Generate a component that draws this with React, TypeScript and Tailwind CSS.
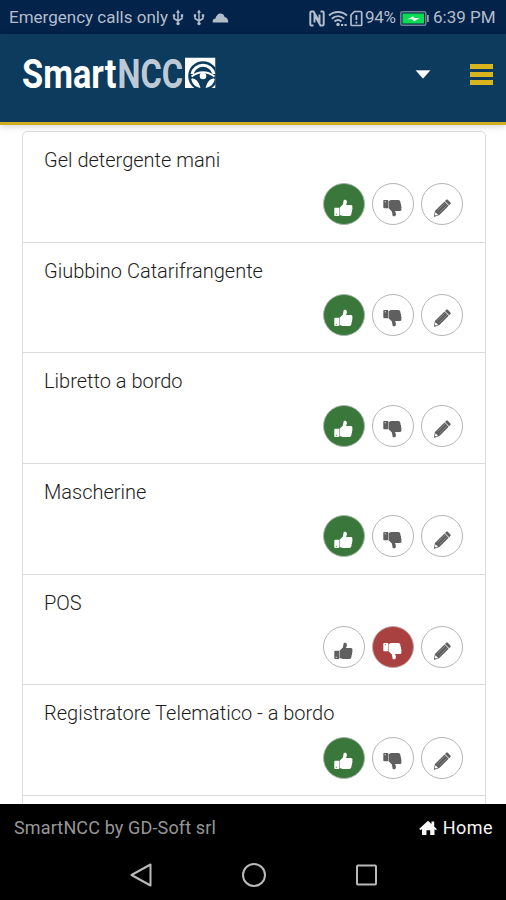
type Vote = "up" | "down";

interface CheckItem {
  label: string;
  vote: Vote;
}

const items: CheckItem[] = [
  { label: "Gel detergente mani", vote: "up" },
  { label: "Giubbino Catarifrangente", vote: "up" },
  { label: "Libretto a bordo", vote: "up" },
  { label: "Mascherine", vote: "up" },
  { label: "POS", vote: "down" },
  { label: "Registratore Telematico - a bordo", vote: "up" },
];

function ThumbIcon({ down = false }: { down?: boolean }) {
  return (
    <svg
      viewBox="0 0 20 20"
      className={`h-5 w-5 shrink-0 ${down ? "rotate-180 -scale-x-100" : ""}`}
      fill="currentColor"
    >
      <path d="M.9 9.800h4.300v8.200H.9l-.6-.6v-7zM1.800 15.700v1h1v-1z" fillRule="evenodd" />
      <path d="M5.600 9.800 8.900 6.500 9.600 2.600C9.900 1.200 12.900 1.200 12.900 3.800c0 1.400-.5 2.200-.9 3.100h4.800c1.700 0 2 1.600 1.400 2.600.5.900.4 1.900-.2 2.600.3 1 .1 1.800-.5 2.400.2 1.900-.6 3.500-2.300 3.500H9.100c-1.400 0-2.200-.6-3.500-.9z" />
    </svg>
  );
}

function PencilIcon() {
  return (
    <svg viewBox="0 0 20 20" className="h-5 w-5 shrink-0" fill="currentColor">
      <path d="M14.200 1.800c.5-.5 1.100-.5 1.600 0l2.600 2.600c.5.500.5 1.100 0 1.600l-1.200 1.200-4.200-4.200z" />
      <path d="m12.500 3.500 4.200 4.200-9.300 9.300-5.500 1.900 1-5.800z" />
      <path d="m3.500 14.300 2.500 2.400-2.200.9-.9-.8z" fill="#fff" />
      <path d="m5.500 12.500 7.500-7.500M7.500 14.500 15 7" stroke="#aaa" strokeWidth=".5" />
    </svg>
  );
}

const idle = "border-[#b5b5b5] bg-white text-[#5f5f5f]";

function CheckRow({ item }: { item: CheckItem }) {
  const button =
    "flex h-[42px] w-[42px] items-center justify-center rounded-full border pt-[7px]";
  return (
    <li className="h-[110.7px] shrink-0 border-b-[1.5px] border-[#dcdcdc] pl-[21px] pr-[21.500px] pt-[13px]">
      <p className="h-[38.300px] text-[20px] font-light leading-[30px] text-[#1c1c1c]">
        {item.label}
      </p>
      <div className="flex justify-end gap-[7.200px]">
        <button
          aria-label="OK"
          className={`${button} ${item.vote === "up" ? "border-[#a8b8a8] bg-[#39773b] text-white" : idle}`}
        >
          <ThumbIcon />
        </button>
        <button
          aria-label="KO"
          className={`${button} ${item.vote === "down" ? "border-[#c4a5a5] bg-[#a94141] text-white" : idle}`}
        >
          <ThumbIcon down />
        </button>
        <button aria-label="Note" className={`${button} ${idle}`}>
          <PencilIcon />
        </button>
      </div>
    </li>
  );
}

function UsbIcon() {
  return (
    <svg viewBox="0 0 12 18" className="h-[18px] w-3" fill="none" stroke="currentColor" strokeWidth="1.500">
      <path d="M6 3v11M2 7v2.500L6 12l4-2.500V7" />
      <path d="m6 .5 2 3.300H4zM.8 5.300h2.400v2.400H.8zM8.800 5.300h2.400v2.400H8.800z" fill="currentColor" stroke="none" />
      <circle cx="6" cy="14.600" r="1.700" fill="currentColor" stroke="none" />
    </svg>
  );
}

function StatusBar() {
  return (
    <div className="flex h-[34px] shrink-0 items-center bg-[#03234a] pt-[2px] pl-[9px] pr-[10px] text-[17px] text-[#b3bdca]">
      <span className="w-[163px] whitespace-nowrap">Emergency calls only</span>
      <UsbIcon />
      <span className="w-[9px]" />
      <UsbIcon />
      <svg viewBox="0 0 17 12" className="ml-[7px] h-3 w-[17px]" fill="currentColor">
        <path d="M1 10.500c-1-1.700.3-4 2.300-3.800C4.200 3.500 6.200 1.500 8.300 1.500c2.500 0 4 1.700 4.400 3.800 2.500 0 3.700 2.600 3.500 5.200z" />
      </svg>
      <div className="ml-auto flex items-center">
        <svg viewBox="0 0 16 17" className="h-[17px] w-4" fill="none" stroke="currentColor" strokeWidth="2">
          <path d="M4.500 15.500h-2c-.7 0-1.200-.5-1.200-1.200V2.700c0-.7.5-1.200 1.200-1.200h2l6 10.500V4.500M11.500 1.500h2c.7 0 1.200.5 1.200 1.200v11.600c0 .7-.5 1.200-1.200 1.200h-2L5.500 5v7.500" />
        </svg>
        <svg viewBox="0 0 20 17" className="ml-[3px] h-[17px] w-5" fill="none" stroke="currentColor" strokeWidth="2">
          <path d="M1 5.500c5-4.700 13-4.700 18 0M3.800 8.700c3.700-3.300 8.700-3.300 12.400 0M6.500 11.500c2-1.700 5-1.700 7 0" />
          <circle cx="10" cy="14.500" r="1.700" fill="currentColor" stroke="none" />
          <path d="M13 15h6" strokeDasharray="2.200 1.300" />
        </svg>
        <svg viewBox="0 0 13 17" className="ml-[2px] h-[17px] w-[13px]" fill="none" stroke="currentColor" strokeWidth="1.700">
          <path d="M4.500 1.500h6.200c.6 0 1 .4 1 1v12c0 .6-.4 1-1 1H2c-.6 0-1-.4-1-1V5z" />
          <path d="M6.400 5v5M6.400 11.500v2" strokeWidth="1.800" />
        </svg>
        <span className="ml-[2px] w-[35px] text-[17px] tracking-[-0.3px]">94%</span>
        <svg viewBox="0 0 30 15" className="h-[15px] w-[30px]">
          <rect x=".8" y=".8" width="25" height="13.400" rx="1.500" fill="none" stroke="#6d8295" strokeWidth="1.500" />
          <rect x="2.500" y="2.500" width="21.600" height="10" fill="#0bdc54" />
          <path d="M27 4h1.800v7H27z" fill="#8d9dac" />
          <path d="m7.500 8.300 5.500-3 1.500 1.800h5l-5.500 3.400-1.800-2.200z" fill="#eafff0" />
        </svg>
        <span className="ml-[3px] w-[63px] whitespace-nowrap text-[17px]">6:39 PM</span>
      </div>
    </div>
  );
}

function Logo() {
  return (
    <svg viewBox="0 -8 196 52" className="h-[52px] w-[196px]" fontFamily="Roboto, sans-serif" fontWeight="700" fontSize="40">
      <g transform="scale(0.85 1)">
        <text x="0" y="31.500" textLength="111" lengthAdjust="spacingAndGlyphs" fill="#fff">
          Smart
        </text>
      </g>
      <g transform="translate(95.500 0) scale(0.8 1)">
        <text x="0" y="31.500" textLength="82" lengthAdjust="spacingAndGlyphs" fill="#bdcad6">
          NCC
        </text>
      </g>
      <svg x="163" y="1.500" width="30.500" height="30.500" viewBox="0 0 30.500 30.500">
        <path d="M0 0h30.500v30.500H0z" fill="#fff" />
        <circle cx="18" cy="18.500" r="14.800" fill="#0c3b5e" />
        <g fill="none" stroke="#fff">
          <path d="M7 16.500A11.300 11.300 0 0 1 29 16.500" strokeWidth="3" />
          <path d="M6.500 19Q18 10.500 29.500 19" strokeWidth="1.800" />
        </g>
        <circle cx="18" cy="18.500" r="3.300" fill="#fff" />
        <path d="M6.800 21.500c4 .3 6.200 3 7.700 8-4-.9-7-4-7.700-8M29.200 21.500c-4 .3-6.200 3-7.700 8 4-.9 7-4 7.700-8" fill="#fff" stroke="#fff" strokeWidth="1.300" />
      </svg>
    </svg>
  );
}

function Header() {
  return (
    <header className="z-10 flex h-[91px] shrink-0 items-center border-b-[3px] border-[#d4ac20] bg-[#0c3b5e] pb-[8px] pl-[22px] pr-[13px] shadow-[0_1px_7px_rgba(0,0,0,0.2)]">
      <Logo />
      <svg viewBox="0 0 18 11" className="ml-auto h-[11px] w-[18px]">
        <path d="M1 1h16l-8 9z" fill="#fff" stroke="#082b4b" strokeWidth=".6" />
      </svg>
      <div className="ml-[38px] flex w-[23px] flex-col gap-[3px]">
        <span className="h-[5px] bg-[#d9b51d]" />
        <span className="h-[5px] bg-[#d9b51d]" />
        <span className="h-[5px] bg-[#d9b51d]" />
      </div>
    </header>
  );
}

function Footer() {
  return (
    <footer className="h-[96px] shrink-0 bg-black">
      <div className="flex h-[47px] items-center justify-between pl-[14px] pr-[13px] text-[18px]">
        <span className="tracking-[0.14px] text-[#979797]">SmartNCC by GD-Soft srl</span>
        <span className="flex items-center gap-[6px] tracking-[0.45px] text-[#f5f5f5]">
          <svg viewBox="0 0 18 16" className="h-4 w-[18px]" fill="currentColor">
            <path d="M9 .8 12.500 4V1.500h2.700v5L18 9.200l-1.200.7-1.300-.6V15h-4.300v-4.800H7.500V15H3V9.300l-1.600.6L0 9z" />
          </svg>
          Home
        </span>
      </div>
      <div className="flex h-[48px] items-center justify-center gap-[88px] pl-px text-[#b9b9b9]">
        <svg viewBox="0 0 24 26" className="h-[26px] w-6" fill="none" stroke="currentColor" strokeWidth="2" strokeLinejoin="round">
          <path d="M21.500 2.500v21L2.500 13z" />
        </svg>
        <svg viewBox="0 0 26 26" className="h-[26px] w-[26px]" fill="none" stroke="currentColor" strokeWidth="2">
          <circle cx="13" cy="13" r="11" />
        </svg>
        <svg viewBox="0 0 24 26" className="h-[26px] w-6" fill="none" stroke="currentColor" strokeWidth="2">
          <rect x="2" y="3.500" width="19" height="19" rx="1" />
        </svg>
      </div>
    </footer>
  );
}

export default function App() {
  return (
    <div className="flex h-[900px] w-[506px] flex-col overflow-hidden bg-white font-[Roboto,sans-serif]">
      <StatusBar />
      <Header />
      <main className="min-h-0 flex-1 overflow-hidden pl-[22px] pr-[20.500px] pt-[6px]">
        <ul className="flex h-[720px] flex-col rounded-t-[5px] border-[1.500px] border-[#dcdcdc]">
          {items.map((item) => (
            <CheckRow key={item.label} item={item} />
          ))}
        </ul>
      </main>
      <Footer />
    </div>
  );
}
